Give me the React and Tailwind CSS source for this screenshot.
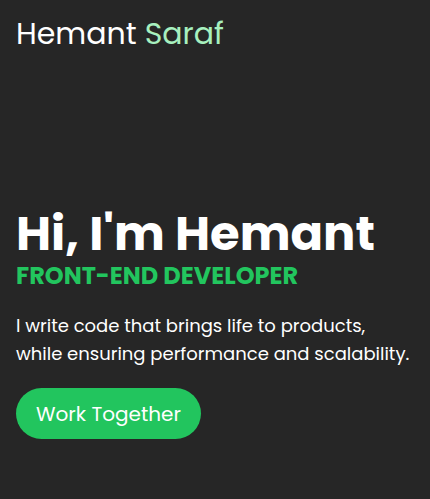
import React from 'react';

const font = { fontFamily: 'Poppins, "Open Sans", "Liberation Sans", sans-serif' };

const App = () => {
  return (
    <div className="min-h-screen bg-[#262626] text-white" style={font}>
      <header className="px-4 pt-[14px]">
        <h1 className="text-[30px] leading-[40px]">
          Hemant <span className="text-[#a7f0bf]">Saraf</span>
        </h1>
      </header>
      <main className="px-4 pt-[156px]">
        <h2 className="text-5xl font-bold leading-[48px]">Hi, I'm Hemant</h2>
        <p className="mt-[4px] text-2xl font-bold leading-[28px] text-[#22c55e]">FRONT-END DEVELOPER</p>
        <p className="mt-[22px] text-lg leading-[28px] text-white">
          I write code that brings life to products, while ensuring performance and scalability.
        </p>
        <button className="mt-[20px] h-[51px] rounded-full bg-[#22c55e] px-5 text-xl text-white">
          Work Together
        </button>
      </main>
    </div>
  );
};

export default App;
